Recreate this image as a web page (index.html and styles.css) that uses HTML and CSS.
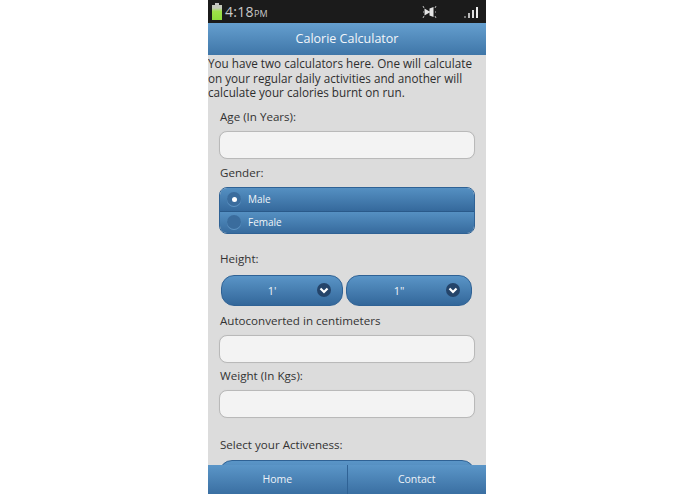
FILE: index.html
```html
<!DOCTYPE html>
<html lang="en">
<head>
    <meta charset="UTF-8">
    <meta name="viewport" content="width=device-width, initial-scale=1.0">
    <title>Calorie Calculator</title>
    <link rel="stylesheet" href="styles.css">
</head>
<body>
    <div class="phone">
        <div class="status-bar">
            <svg class="battery" width="10" height="17" viewBox="0 0 10 17">
                <defs>
                    <linearGradient id="batteryFill" x1="0" y1="0" x2="0" y2="1">
                        <stop offset="0.2" stop-color="#c4c8bc"/>
                        <stop offset="0.42" stop-color="#9fe04a"/>
                        <stop offset="1" stop-color="#8edb3a"/>
                    </linearGradient>
                </defs>
                <rect x="3" y="0" width="4" height="2" fill="#c4c4c4"/>
                <rect x="0" y="2" width="10" height="15" fill="url(#batteryFill)"/>
            </svg>
            <span class="time">4:18<small>PM</small></span>
            <svg class="silent" width="15" height="14" viewBox="0 0 15 14">
                <path d="M2.500 3.500l5 3V3.500l4 -1.500v10l-4 -1.500V7.500l-5 3z" fill="#e4e4e4"/>
                <path d="M1 1l1 2M1 7h1M1 13l1 -2M14 1l-1 2M14 7h-1M14 13l-1 -2" stroke="#bbb" fill="none"/>
            </svg>
            <svg class="signal" width="14" height="12" viewBox="0 0 14 12">
                <rect x="0" y="10" width="2" height="2" fill="#777"/>
                <rect x="4" y="7" width="2" height="5" fill="#bbb"/>
                <rect x="8" y="4" width="2" height="8" fill="#ddd"/>
                <rect x="12" y="1" width="2" height="11" fill="#eee"/>
            </svg>
        </div>
        <div class="header">Calorie Calculator</div>
        <div class="content">
            <p class="intro">You have two calculators here. One will calculate on your regular daily activities and another will calculate your calories burnt on run.</p>
            <form class="calc-form">
                <label class="field-label age-label">Age (In Years):</label>
                <input class="text-input" type="text">

                <label class="field-label gender-label">Gender:</label>
                <div class="radio-group">
                    <div class="radio-row">
                        <span class="radio checked"></span>
                        <span>Male</span>
                    </div>
                    <div class="radio-row">
                        <span class="radio"></span>
                        <span>Female</span>
                    </div>
                </div>

                <label class="field-label height-label">Height:</label>
                <div class="select-row">
                    <div class="select-btn">
                        <span class="select-text">1'</span>
                        <span class="select-arrow">
                            <svg width="14" height="14" viewBox="0 0 14 14"><path d="M3.500 5.500L7 9l3.500 -3.500" fill="none" stroke="#fff" stroke-width="2.200"/></svg>
                        </span>
                    </div>
                    <div class="select-btn">
                        <span class="select-text">1"</span>
                        <span class="select-arrow">
                            <svg width="14" height="14" viewBox="0 0 14 14"><path d="M3.500 5.500L7 9l3.500 -3.500" fill="none" stroke="#fff" stroke-width="2.200"/></svg>
                        </span>
                    </div>
                </div>

                <label class="field-label auto-label">Autoconverted in centimeters</label>
                <input class="text-input" type="text">

                <label class="field-label weight-label">Weight (In Kgs):</label>
                <input class="text-input" type="text">

                <label class="field-label active-label">Select your Activeness:</label>
                <div class="activeness-select"></div>
            </form>
        </div>
        <div class="footer">
            <div class="footer-tab">Home</div>
            <div class="footer-tab">Contact</div>
        </div>
    </div>
</body>
</html>
```

FILE: styles.css
```css
html, body {
    margin: 0;
    padding: 0;
    height: 100%;
    background-color: #fff;
    overflow: hidden;
}

body {
    font-family: "Open Sans", "Noto Sans", sans-serif;
    color: #333;
}

.phone {
    width: 278px;
    height: 494px;
    margin-left: 208px;
    display: flex;
    flex-direction: column;
    background-color: #dcdcdc;
    overflow: hidden;
}

.status-bar {
    height: 23px;
    flex: none;
    display: flex;
    align-items: center;
    background-color: #1b1b1b;
    color: #c9c9c9;
    padding: 0 8px 0 4px;
}

.battery {
    margin-right: 3px;
}

.time {
    font-size: 14px;
    letter-spacing: 0.3px;
    flex: 1;
}

.time small {
    font-size: 9px;
}

.silent {
    margin-right: 27px;
}

.header {
    height: 32px;
    flex: none;
    line-height: 31px;
    text-align: center;
    font-size: 12.500px;
    color: #f2f6fa;
    background: linear-gradient(#659fcf, #3f76a8);
}

.content {
    flex: 1;
    min-height: 0;
    overflow: hidden;
}

.intro {
    margin: 0;
    padding-top: 1px;
    font-size: 11.700px;
    line-height: 14.500px;
    color: #2e2e2e;
}

.calc-form {
    padding: 0 11px;
}

.field-label {
    display: block;
    font-size: 11.600px;
    line-height: 16px;
    margin-left: 1px;
    color: #333;
}

.age-label {
    margin-top: 9px;
    margin-bottom: 6px;
}

.gender-label {
    margin-top: 6px;
    margin-bottom: 6px;
}

.height-label {
    margin-top: 17px;
    margin-bottom: 8px;
}

.auto-label {
    margin-top: 7px;
    margin-bottom: 6px;
}

.weight-label {
    margin-top: 5px;
    margin-bottom: 6px;
}

.active-label {
    margin-top: 19px;
    margin-bottom: 7px;
}

.text-input {
    display: block;
    box-sizing: border-box;
    width: 256px;
    height: 28px;
    padding: 0;
    border: 1px solid #b9b9b9;
    border-radius: 8px;
    background-color: #f3f3f3;
    box-shadow: 0 0 1px #ccc;
}

.radio-group {
    width: 256px;
    height: 47px;
    border-radius: 8px;
    overflow: hidden;
    border: 1px solid #2f6295;
    box-sizing: border-box;
}

.radio-row {
    height: 23px;
    display: flex;
    align-items: center;
    font-size: 10px;
    color: #f0f4f8;
    background: linear-gradient(#5590c2, #35699c);
}

.radio-row + .radio-row {
    height: 21px;
    padding-bottom: 1px;
    border-top: 1px solid #2a5a8a;
}

.radio {
    width: 14px;
    height: 14px;
    margin: 0 7px;
    flex: none;
    border-radius: 50%;
    background-color: #3a6c9d;
    box-shadow: 0 1px 0 #5f95c4;
    display: flex;
    align-items: center;
    justify-content: center;
}

.radio.checked::after {
    content: "";
    width: 5px;
    height: 5px;
    border-radius: 50%;
    background-color: #fff;
}

.select-row {
    display: flex;
    gap: 3px;
    margin-left: 2px;
}

.select-btn {
    box-sizing: border-box;
    width: 122px;
    height: 31px;
    display: flex;
    align-items: center;
    border: 1px solid #2f6295;
    border-radius: 13px;
    background: linear-gradient(#5a95c7, #33679a);
    color: #f0f4f8;
    font-size: 11px;
    padding-right: 11px;
}

.select-row .select-btn:last-child {
    width: 126px;
}

.select-text {
    flex: 1;
    text-align: center;
    padding-left: 5px;
}

.select-arrow {
    width: 14px;
    height: 14px;
    border-radius: 50%;
    background-color: #24446a;
    display: flex;
}

.activeness-select {
    width: 256px;
    height: 40px;
    box-sizing: border-box;
    border: 1px solid #2f6295;
    border-radius: 13px;
    background: linear-gradient(#5a95c7, #33679a);
}

.footer {
    height: 29px;
    flex: none;
    display: flex;
    background: linear-gradient(#5b96c8, #3a6fa2);
}

.footer-tab {
    flex: 1;
    line-height: 29px;
    text-align: center;
    font-size: 10.500px;
    color: #eef3f8;
}

.footer-tab + .footer-tab {
    border-left: 1px solid #2f6295;
}
```
